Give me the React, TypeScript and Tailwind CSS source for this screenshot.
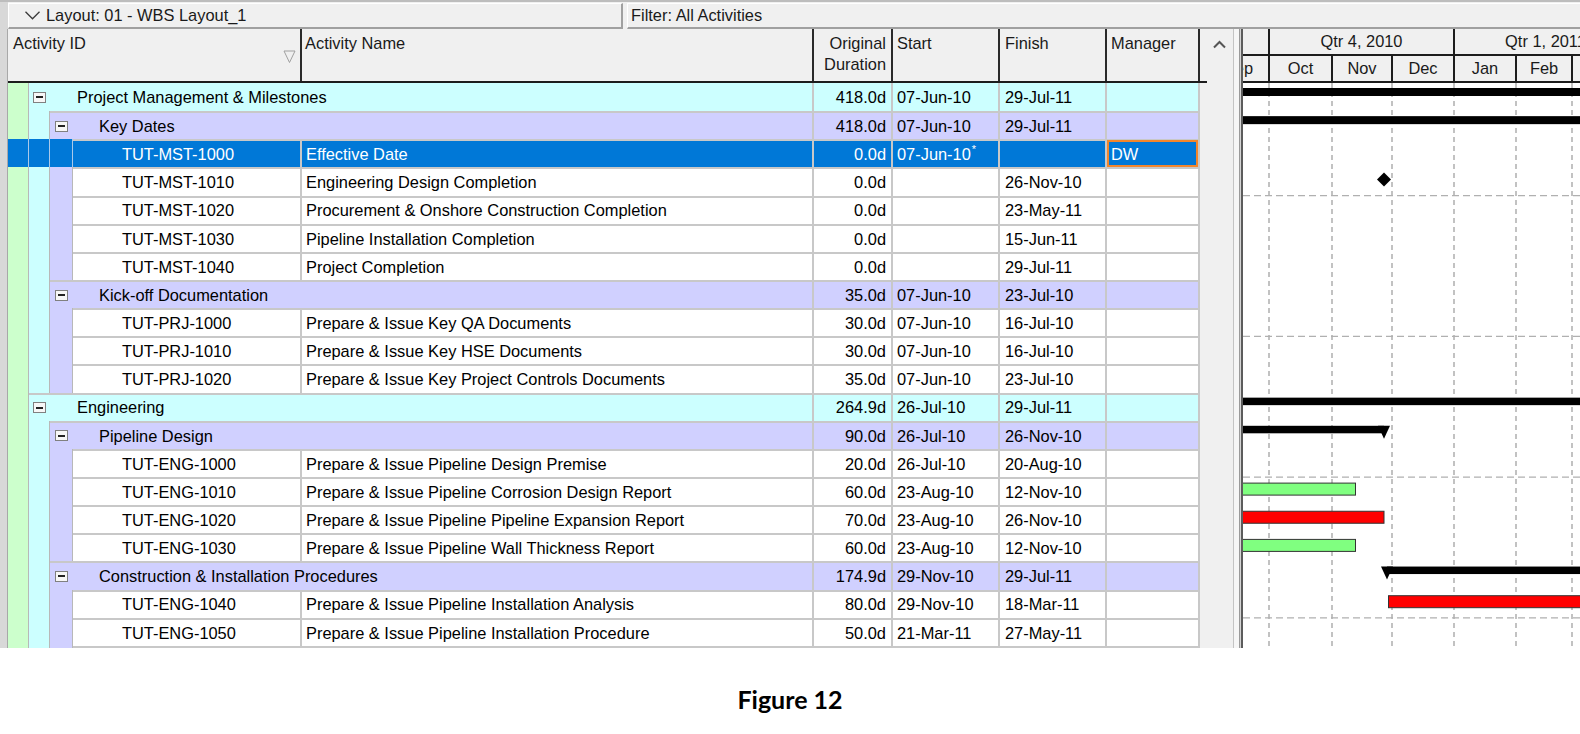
import React from "react";

type Sum = { kind: "l1" | "l2"; name: string; dur: string; start: string; finish: string };
type Act = {
  kind: "act";
  id: string;
  name: string;
  dur: string;
  start: string;
  finish: string;
  mgr?: string;
  sel?: boolean;
  star?: boolean;
  blank?: boolean;
};
type Row = Sum | Act;

const rows: Row[] = [
  { kind: "l1", name: "Project Management & Milestones", dur: "418.0d", start: "07-Jun-10", finish: "29-Jul-11" },
  { kind: "l2", name: "Key Dates", dur: "418.0d", start: "07-Jun-10", finish: "29-Jul-11" },
  { kind: "act", id: "TUT-MST-1000", name: "Effective Date", dur: "0.0d", start: "07-Jun-10", finish: "", mgr: "DW", sel: true, star: true },
  { kind: "act", id: "TUT-MST-1010", name: "Engineering Design Completion", dur: "0.0d", start: "", finish: "26-Nov-10" },
  { kind: "act", id: "TUT-MST-1020", name: "Procurement & Onshore Construction Completion", dur: "0.0d", start: "", finish: "23-May-11" },
  { kind: "act", id: "TUT-MST-1030", name: "Pipeline Installation Completion", dur: "0.0d", start: "", finish: "15-Jun-11" },
  { kind: "act", id: "TUT-MST-1040", name: "Project Completion", dur: "0.0d", start: "", finish: "29-Jul-11" },
  { kind: "l2", name: "Kick-off Documentation", dur: "35.0d", start: "07-Jun-10", finish: "23-Jul-10" },
  { kind: "act", id: "TUT-PRJ-1000", name: "Prepare & Issue Key QA Documents", dur: "30.0d", start: "07-Jun-10", finish: "16-Jul-10" },
  { kind: "act", id: "TUT-PRJ-1010", name: "Prepare & Issue Key HSE Documents", dur: "30.0d", start: "07-Jun-10", finish: "16-Jul-10" },
  { kind: "act", id: "TUT-PRJ-1020", name: "Prepare & Issue Key Project Controls Documents", dur: "35.0d", start: "07-Jun-10", finish: "23-Jul-10" },
  { kind: "l1", name: "Engineering", dur: "264.9d", start: "26-Jul-10", finish: "29-Jul-11" },
  { kind: "l2", name: "Pipeline Design", dur: "90.0d", start: "26-Jul-10", finish: "26-Nov-10" },
  { kind: "act", id: "TUT-ENG-1000", name: "Prepare & Issue Pipeline Design Premise", dur: "20.0d", start: "26-Jul-10", finish: "20-Aug-10" },
  { kind: "act", id: "TUT-ENG-1010", name: "Prepare & Issue Pipeline Corrosion Design Report", dur: "60.0d", start: "23-Aug-10", finish: "12-Nov-10" },
  { kind: "act", id: "TUT-ENG-1020", name: "Prepare & Issue Pipeline Pipeline Expansion Report", dur: "70.0d", start: "23-Aug-10", finish: "26-Nov-10" },
  { kind: "act", id: "TUT-ENG-1030", name: "Prepare & Issue Pipeline Wall Thickness Report", dur: "60.0d", start: "23-Aug-10", finish: "12-Nov-10" },
  { kind: "l2", name: "Construction & Installation Procedures", dur: "174.9d", start: "29-Nov-10", finish: "29-Jul-11" },
  { kind: "act", id: "TUT-ENG-1040", name: "Prepare & Issue Pipeline Installation Analysis", dur: "80.0d", start: "29-Nov-10", finish: "18-Mar-11" },
  { kind: "act", id: "TUT-ENG-1050", name: "Prepare & Issue Pipeline Installation Procedure", dur: "50.0d", start: "21-Mar-11", finish: "27-May-11" },
  { kind: "act", id: "", name: "", dur: "", start: "", finish: "", blank: true },
];

const RH = 28.15;

function MinusBox() {
  return (
    <div className="w-[13px] h-[11px] shrink-0 border border-[#808080] bg-[#f7f7f7] flex items-center justify-center">
      <div className="w-[7px] h-[2px] bg-[#222]" />
    </div>
  );
}

function GridRow({ r, i }: { r: Row; i: number }) {
  const sel = r.kind === "act" && !!r.sel;
  const line = i > 0 ? "border-t-2" : "border-t-0";
  let bg = "bg-white text-black";
  if (r.kind === "l1") bg = "bg-[#ccffff] text-black";
  if (r.kind === "l2") bg = "bg-[#d0d0ff] text-black";
  if (sel) bg = "bg-[#0078d7] text-white";
  return (
    <div className="flex h-[28.15px] shrink-0">
      <div
        className={
          sel
            ? "w-[21px] shrink-0 bg-[#0078d7] border-r border-[#a9c9ea]"
            : "w-[21px] shrink-0 bg-[#ccffcc] border-r border-[#b8b8b8]"
        }
      />
      {r.kind !== "l1" && (
        <div
          className={
            sel
              ? "w-[21px] shrink-0 bg-[#0078d7] border-r border-[#a9c9ea]"
              : "w-[21px] shrink-0 bg-[#ccffff] border-r border-[#b8b8b8]"
          }
        />
      )}
      {r.kind === "act" && (
        <div
          className={
            sel
              ? "w-[23px] shrink-0 bg-[#0078d7] border-r border-[#a9c9ea]"
              : "w-[23px] shrink-0 bg-[#d0d0ff] border-r border-[#b8b8b8]"
          }
        />
      )}
      <div className={`flex flex-1 min-w-0 border-[#c8c8c8] ${line} ${bg}`}>
        {r.kind === "l1" && (
          <div className="w-[785px] shrink-0 flex items-center pl-[4px] border-r-2 border-[#c8c8c8] whitespace-nowrap">
            <MinusBox />
            <span className="ml-[31px]">{r.name}</span>
          </div>
        )}
        {r.kind === "l2" && (
          <div className="w-[764px] shrink-0 flex items-center pl-[5px] border-r-2 border-[#c8c8c8] whitespace-nowrap">
            <MinusBox />
            <span className="ml-[31px]">{r.name}</span>
          </div>
        )}
        {r.kind === "act" && (
          <>
            <div className="w-[229px] shrink-0 flex items-center pl-[49px] border-r-2 border-[#c8c8c8] whitespace-nowrap">
              {r.id}
            </div>
            <div className="w-[512px] shrink-0 flex items-center pl-[4px] border-r-2 border-[#c8c8c8] whitespace-nowrap overflow-hidden">
              {r.name}
            </div>
          </>
        )}
        <div className="w-[79px] shrink-0 flex items-center justify-end pr-[5px] border-r-2 border-[#c8c8c8] whitespace-nowrap">
          {r.dur}
        </div>
        <div className="w-[107px] shrink-0 flex items-center pl-[4px] border-r-2 border-[#c8c8c8] whitespace-nowrap">
          {r.start}
          {r.kind === "act" && r.star && <span className="text-[11px] relative top-[-5px] ml-[1px]">*</span>}
        </div>
        <div className="w-[107px] shrink-0 flex items-center pl-[5px] border-r-2 border-[#c8c8c8] whitespace-nowrap">
          {r.finish}
        </div>
        <div className="w-[93px] shrink-0 flex items-stretch border-r-2 border-[#c8c8c8] whitespace-nowrap">
          {r.kind === "act" && r.sel ? (
            <div className="flex-1 flex items-center border-2 border-[#f3862c] pl-[2px] mt-[-1px]">{r.mgr}</div>
          ) : (
            <div className="flex-1 flex items-center pl-[4px]">{r.kind === "act" ? r.mgr : ""}</div>
          )}
        </div>
      </div>
    </div>
  );
}

function GanttBody() {
  const rt = (i: number) => i * RH;
  const vlines = [26, 89, 149, 211, 273, 329];
  const hlines = [4, 9, 14, 19];
  const sumTop = (i: number) => rt(i) + 5;
  const actTop = (i: number) => rt(i) + 6;
  return (
    <svg width={337} height={565} className="block">
      {vlines.map((x) => (
        <line key={"v" + x} x1={x} x2={x} y1={0} y2={565} stroke="#a9a9a9" strokeWidth={1.4} strokeDasharray="5 4" />
      ))}
      {hlines.map((k) => (
        <line key={"h" + k} x1={0} x2={337} y1={k * RH} y2={k * RH} stroke="#b0b0b0" strokeWidth={1.4} strokeDasharray="7 4" />
      ))}
      {/* summary bars */}
      <rect x={-5} y={sumTop(0)} width={350} height={8} fill="#000" />
      <rect x={-5} y={sumTop(1)} width={350} height={8} fill="#000" />
      <rect x={-5} y={sumTop(11)} width={350} height={7.5} fill="#000" />
      <rect x={-5} y={sumTop(12)} width={146} height={7.5} fill="#000" />
      <polygon
        points={`${135},${sumTop(12)} ${147},${sumTop(12)} ${141},${sumTop(12) + 13}`}
        fill="#000"
      />
      <rect x={144} y={sumTop(17)} width={200} height={7.5} fill="#000" />
      <polygon
        points={`${138},${sumTop(17)} ${150},${sumTop(17)} ${144},${sumTop(17) + 13}`}
        fill="#000"
      />
      {/* milestone diamond */}
      <polygon
        points={`141,${rt(3) + 5} 148,${rt(3) + 12} 141,${rt(3) + 19} 134,${rt(3) + 12}`}
        fill="#000"
      />
      {/* activity bars */}
      <rect x={-5} y={actTop(14)} width={117.5} height={12} fill="#80ff80" stroke="#333" strokeWidth={1} />
      <rect x={-5} y={actTop(15)} width={146} height={12} fill="#ff0000" stroke="#333" strokeWidth={1} />
      <rect x={-5} y={actTop(16)} width={117.5} height={12} fill="#80ff80" stroke="#333" strokeWidth={1} />
      <rect x={145.5} y={actTop(18)} width={220} height={12} fill="#ff0000" stroke="#333" strokeWidth={1} />
    </svg>
  );
}

export default function App() {
  return (
    <div className="w-[1580px] h-[734px] bg-white overflow-hidden font-['Liberation_Sans',Arial,sans-serif] text-[16.4px] text-black">
      <div className="h-[648px] flex flex-col">
        {/* top bar */}
        <div className="h-[29px] shrink-0 flex border-t-2 border-[#bdbdbd] bg-[#f0f0f0]">
          <div className="w-[8px] shrink-0 bg-[#d8d8d8]" />
          <div className="flex-1 flex gap-[4px] pt-[1px]">
            <div className="w-[615px] shrink-0 flex items-center pl-[16px] gap-[6px] bg-[#f0f0f0] border-l border-t border-white border-r-2 border-b-2 border-r-[#a0a0a0] border-b-[#a0a0a0] text-[#1a1a1a] whitespace-nowrap">
              <svg width="15" height="9" viewBox="0 0 15 9" className="shrink-0">
                <polyline points="0.5,0.8 7.5,7.8 14.5,0.8" fill="none" stroke="#3a3a3a" strokeWidth="1.3" />
              </svg>
              <span>Layout: 01 - WBS Layout_1</span>
            </div>
            <div className="flex-1 flex items-center pl-[3px] bg-[#f0f0f0] border-l border-t border-white border-b-2 border-b-[#a0a0a0] text-[#1a1a1a] whitespace-nowrap">
              Filter: All Activities
            </div>
          </div>
        </div>

        {/* main area */}
        <div className="flex h-[619px]">
          <div className="w-[8px] shrink-0 bg-[#d8d8d8] border-r border-[#a8a8a8]" />

          {/* table */}
          <div className="w-[1192px] shrink-0 flex flex-col">
            <div className="h-[54px] shrink-0 flex bg-[#f0f0f0] border-b-2 border-[#1c1c1c] text-[#1a1a1a] leading-[21px] whitespace-nowrap">
              <div className="w-[294px] shrink-0 relative border-r-2 border-[#2a2a2a] pl-[5px] pt-[4px]">
                Activity ID
                <svg width="13" height="14" viewBox="0 0 13 14" className="absolute left-[275px] top-[21px]">
                  <polygon points="1,1 12,1 6.5,12.5" fill="none" stroke="#a0a0a0" strokeWidth="1" />
                </svg>
              </div>
              <div className="w-[512px] shrink-0 border-r-2 border-[#2a2a2a] pl-[3px] pt-[4px]">Activity Name</div>
              <div className="w-[79px] shrink-0 border-r-2 border-[#2a2a2a] pr-[5px] pt-[4px] text-right">
                <div>Original</div>
                <div>Duration</div>
              </div>
              <div className="w-[107px] shrink-0 border-r-2 border-[#2a2a2a] pl-[4px] pt-[4px]">Start</div>
              <div className="w-[107px] shrink-0 border-r-2 border-[#2a2a2a] pl-[5px] pt-[4px]">Finish</div>
              <div className="w-[93px] shrink-0 border-r-2 border-[#2a2a2a] pl-[4px] pt-[4px]">Manager</div>
            </div>
            <div className="h-[565px] overflow-hidden flex flex-col leading-none">
              {rows.map((r, i) => (
                <GridRow key={i} r={r} i={i} />
              ))}
            </div>
          </div>

          {/* vertical scrollbar */}
          <div className="w-[34px] shrink-0 flex flex-col bg-[#f0f0f0] border-r border-[#c4c4c4]">
            <div className="h-[54px] flex flex-col">
              <div className="pl-[13px] pt-[11px]">
                <svg width="13" height="9" viewBox="0 0 13 9">
                  <polyline points="1,7.5 6.5,2 12,7.5" fill="none" stroke="#555" strokeWidth="2" />
                </svg>
              </div>
              <div className="mt-auto w-[7px] h-[2px] bg-[#1c1c1c]" />
            </div>
          </div>

          {/* splitter */}
          <div className="w-[5px] shrink-0 bg-[#f6f6f6]" />
          <div className="w-[4px] shrink-0 bg-[#d4d4d4] border-l border-[#9a9a9a] border-r-2 border-r-[#5c5c5c]" />

          {/* gantt */}
          <div className="w-[337px] shrink-0 overflow-hidden flex flex-col">
            <div className="h-[54px] shrink-0 flex flex-col bg-[#f0f0f0] text-[#1a1a1a] whitespace-nowrap leading-none">
              <div className="h-[27px] shrink-0 flex border-b-2 border-[#1c1c1c]">
                <div className="w-[27px] shrink-0 border-r-2 border-[#1c1c1c]" />
                <div className="w-[185px] shrink-0 border-r-2 border-[#1c1c1c] flex items-center justify-center">
                  Qtr 4, 2010
                </div>
                <div className="w-[181px] shrink-0 flex items-center justify-center">Qtr 1, 2011</div>
              </div>
              <div className="h-[27px] shrink-0 flex border-b-2 border-[#1c1c1c]">
                <div className="w-[61px] ml-[-34px] shrink-0 border-r-2 border-[#1c1c1c] flex items-center justify-center">
                  Sep
                </div>
                <div className="w-[63px] shrink-0 border-r-2 border-[#1c1c1c] flex items-center justify-center">Oct</div>
                <div className="w-[60px] shrink-0 border-r-2 border-[#1c1c1c] flex items-center justify-center">Nov</div>
                <div className="w-[62px] shrink-0 border-r-2 border-[#1c1c1c] flex items-center justify-center">Dec</div>
                <div className="w-[62px] shrink-0 border-r-2 border-[#1c1c1c] flex items-center justify-center">Jan</div>
                <div className="w-[56px] shrink-0 border-r-2 border-[#1c1c1c] flex items-center justify-center">Feb</div>
                <div className="w-[62px] shrink-0 border-r-2 border-[#1c1c1c] flex items-center justify-center">Mar</div>
              </div>
            </div>
            <div className="h-[565px] bg-white">
              <GanttBody />
            </div>
          </div>
        </div>
      </div>

      <div className="pt-[36px] text-center font-['Lato','Open_Sans',sans-serif] font-bold text-[25px] leading-[30px] text-black">
        Figure 12
      </div>
    </div>
  );
}
